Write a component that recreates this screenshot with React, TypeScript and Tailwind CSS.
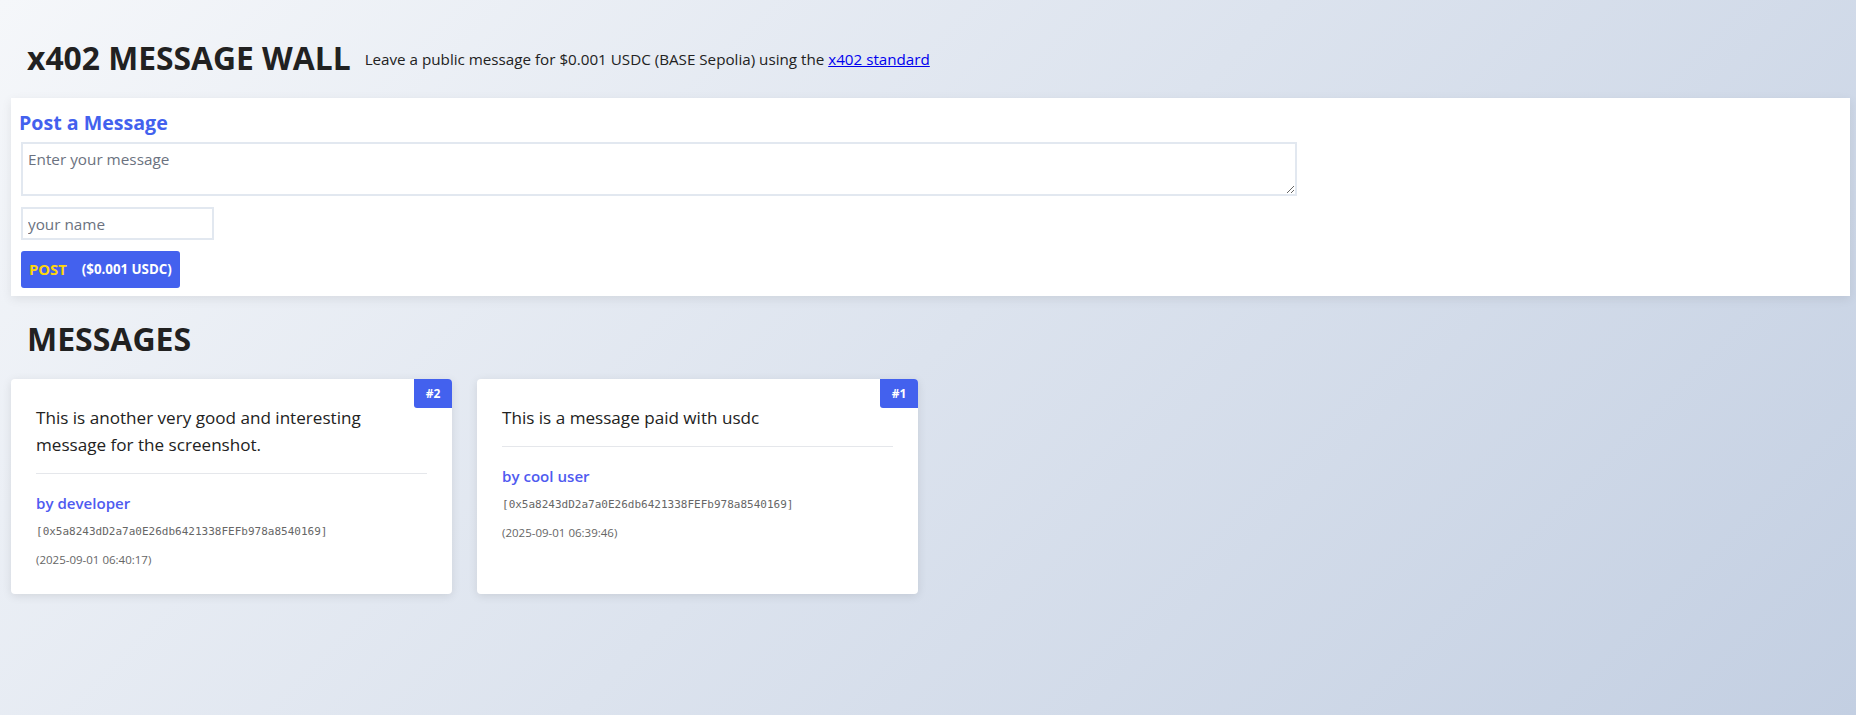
import React from "react";

const messages = [
  {
    id: 2,
    text: "This is another very good and interesting message for the screenshot.",
    author: "developer",
    address: "0x5a8243dD2a7a0E26db6421338FEFb978a8540169",
    date: "2025-09-01 06:40:17",
  },
  {
    id: 1,
    text: "This is a message paid with usdc",
    author: "cool user",
    address: "0x5a8243dD2a7a0E26db6421338FEFb978a8540169",
    date: "2025-09-01 06:39:46",
  },
];

export default function App() {
  return (
    <div
      className="min-h-screen w-full bg-[linear-gradient(135deg,#f5f7fa_0%,#c3cfe2_100%)] text-[#222] overflow-hidden"
      style={{ fontFamily: '"Open Sans", "Noto Sans", sans-serif' }}
    >
      <div className="pt-[39px] pl-[27px] flex items-center h-[78px]">
        <h1 className="text-[31.8px] leading-[32px] font-bold text-[#212121] pb-[2px]">
          x402 MESSAGE WALL
        </h1>
        <p className="ml-[14px] text-[15.2px] leading-[20px] text-[#222]">
          Leave a public message for $0.001 USDC (BASE Sepolia) using the{" "}
          <a href="#" className="text-[#0000ee] underline">
            x402 standard
          </a>
        </p>
      </div>

      <div className="mt-[20px] ml-[11px] w-[1839px] bg-white shadow-[0_3px_10px_rgba(0,0,0,0.08)] pl-[10px] pt-[13px] pb-[8px]">
        <h3 className="-ml-[2px] text-[19.6px] leading-[24px] font-bold text-[#4361ee]">
          Post a Message
        </h3>
        <textarea
          className="mt-[7px] block w-[1276px] h-[54px] border-2 border-[#e2e8f0] p-[5px] text-[15.3px] leading-[20px] text-[#222] placeholder:text-[#6b7280] outline-none"
          placeholder="Enter your message"
        />
        <input
          className="mt-[11px] block w-[193px] h-[33px] border-2 border-[#e2e8f0] px-[5px] text-[15.3px] text-[#222] placeholder:text-[#6b7280] outline-none"
          placeholder="your name"
        />
        <button className="mt-[11px] flex items-center h-[37px] w-[159px] px-[8px] rounded-[3px] bg-[#4361ee] font-bold">
          <span className="text-[14.8px] text-[#ffd60a]">POST</span>
          <span className="ml-[15px] text-[13.3px] text-white">($0.001 USDC)</span>
        </button>
      </div>

      <h2 className="mt-[27px] pl-[27px] text-[32px] leading-[32px] font-bold text-[#212121]">
        MESSAGES
      </h2>

      <div className="mt-[24px] ml-[11px] flex gap-[25px] items-stretch">
        {messages.map((m) => (
          <div
            key={m.id}
            className="relative w-[441px] bg-white rounded-[4px] shadow-[0_2px_10px_rgba(0,0,0,0.1)] p-[25px]"
          >
            <div className="absolute top-0 right-0 w-[38px] h-[29px] bg-[#4361ee] rounded-tr-[4px] rounded-bl-[3px] flex items-center justify-center text-white text-[12px] font-bold">
              #{m.id}
            </div>
            <p className="text-[17.1px] leading-[27px] text-[#222] pb-[15px] border-b border-[#e5e7eb] pr-[8px]">
              {m.text}
            </p>
            <p className="mt-[17px] text-[15.1px] leading-[24px] font-semibold text-[#4f5bf0]">
              by {m.author}
            </p>
            <p
              className="mt-[8px] text-[11px] leading-[18px] text-[#666]"
              style={{ fontFamily: '"DejaVu Sans Mono", monospace' }}
            >
              [{m.address}]
            </p>
            <p className="mt-[10px] text-[11.5px] leading-[18px] text-[#666]">
              ({m.date})
            </p>
          </div>
        ))}
      </div>
    </div>
  );
}
